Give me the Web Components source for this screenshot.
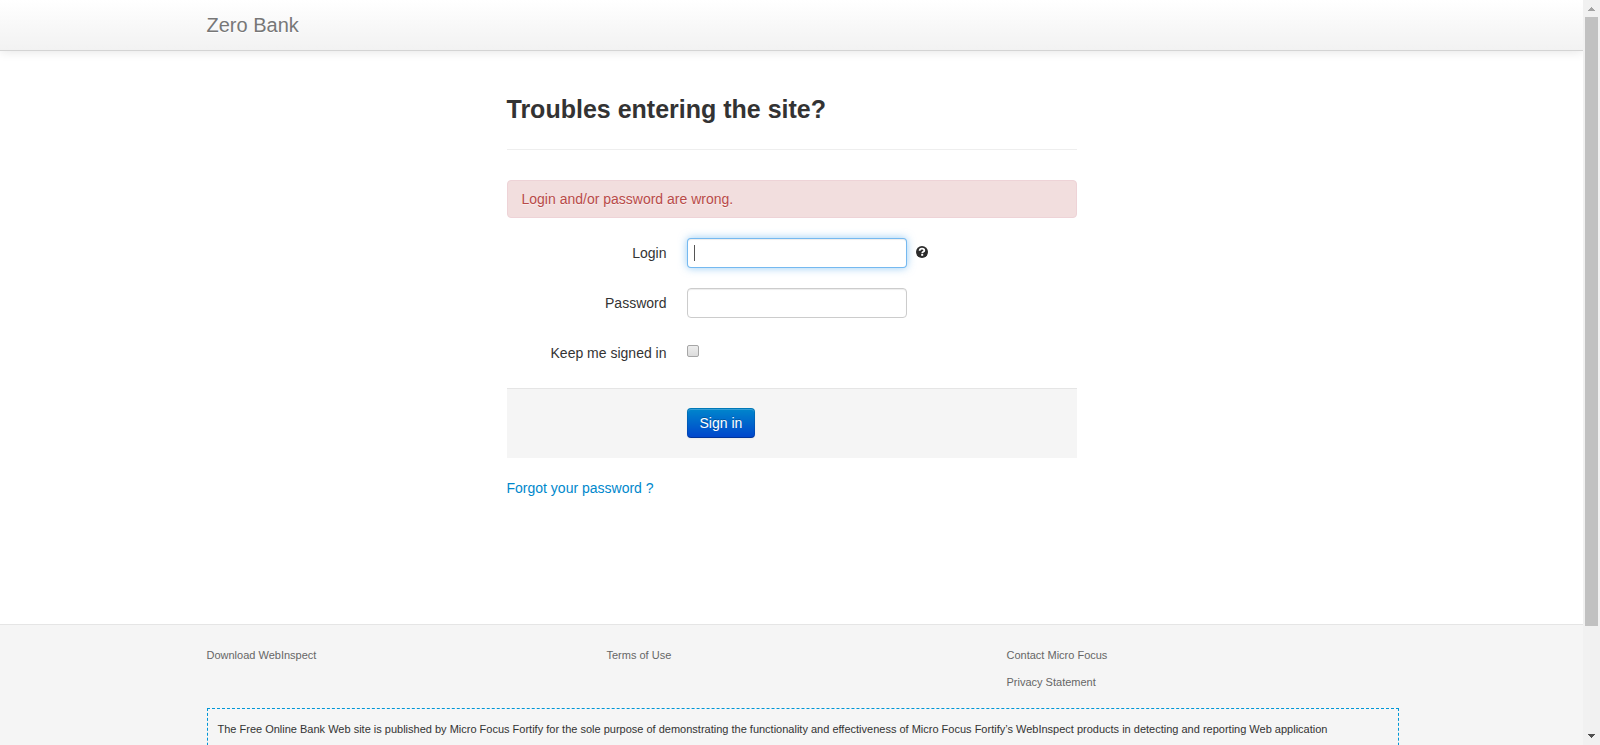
<!DOCTYPE html>
<html lang="en">
<head>
<meta charset="utf-8">
<meta name="viewport" content="width=device-width, initial-scale=1">
<title>Zero - Log in</title>
<style>
html, body { margin: 0; height: 100%; }
body { font: 14px/20px "Liberation Sans", Arial, sans-serif; color: #333; background: #fff; overflow: hidden; }
</style>
</head>
<body>
<zero-window>
  <zero-navbar>Zero Bank</zero-navbar>
  <zero-login>
    <zero-alert>Login and/or password are wrong.</zero-alert>
  </zero-login>
  <zero-footer></zero-footer>
</zero-window>

<script>
function define(name, html, setup) {
  const template = document.createElement('template');
  template.innerHTML = html;
  customElements.define(name, class extends HTMLElement {
    constructor() {
      super();
      this.attachShadow({ mode: 'open', delegatesFocus: true }).append(template.content.cloneNode(true));
    }
    connectedCallback() { if (setup) setup(this, this.shadowRoot); }
  });
}

define('zero-scrollbar', `
<style>
:host { display: flex; flex-direction: column; width: 17px; background: #f1f1f1; }
svg { display: block; flex: none; width: 17px; height: 17px; }
.track { flex: 1; display: grid; grid-template-rows: 6fr 1fr; padding: 0 2px; }
.thumb { background: #c1c1c1; }
</style>
<svg viewBox="0 0 17 17" shape-rendering="crispEdges" aria-hidden="true"><path fill="#a3a3a3" d="M8 7h1v1h1v1h1v1h1v1H5v-1h1V9h1V8h1z"/></svg>
<div class="track"><div class="thumb"></div></div>
<svg viewBox="0 0 17 17" shape-rendering="crispEdges" aria-hidden="true"><path fill="#505050" d="M5 6h7v1h-1v1h-1v1H9v1H8V9H7V8H6V7H5z"/></svg>`);

define('zero-window', `
<style>
:host { display: grid; grid-template-columns: minmax(0, 1fr) auto; height: 100vh; overflow: hidden; }
.page { overflow: hidden; display: flex; flex-direction: column; }
</style>
<div class="page"><slot></slot></div>
<zero-scrollbar></zero-scrollbar>`);

define('zero-navbar', `
<style>
:host { display: block; flex: none; background: linear-gradient(#fff, #f2f2f2); border-bottom: 1px solid #d4d4d4; box-shadow: 0 1px 10px rgba(0,0,0,.1); }
.container { max-width: 1170px; margin: 0 auto; padding: 15px 0; }
a { display: block; width: fit-content; font-size: 20px; line-height: 20px; color: #777; text-decoration: none; text-shadow: 0 1px 0 #fff; }
</style>
<div class="container"><a href="#"><slot></slot></a></div>`);

define('zero-alert', `
<style>
:host { display: block; padding: 8px 14px; border: 1px solid #eed3d7; border-radius: 4px; background: #f2dede; color: #b94a48; text-shadow: 0 1px 0 rgba(255,255,255,.5); }
</style>
<slot></slot>`);

define('zero-field', `
<style>
:host { display: grid; grid-template-columns: 160px 1fr; column-gap: 20px; min-height: 30px; margin-bottom: 20px; }
label { padding-top: 5px; text-align: right; }
.control { display: flex; gap: 9px; }
input { box-sizing: border-box; margin: 0; font: inherit; color: #555; }
input.text { width: 220px; height: 30px; padding: 4px 6px; border: 1px solid #ccc; border-radius: 4px; background: #fff; outline: 0; box-shadow: inset 0 1px 1px rgba(0,0,0,.075); }
:host([active]) input.text { border-color: rgba(82,168,236,.8); caret-color: transparent; background: linear-gradient(#555, #555) 6px 6px / 1px 16px no-repeat #fff; box-shadow: inset 0 1px 1px rgba(0,0,0,.075), 0 0 8px rgba(82,168,236,.6); }
input.check { appearance: none; width: 12px; height: 12px; margin-top: 7px; border: 1px solid #a6a6a6; border-radius: 2px; background: linear-gradient(#ededed, #dcdcdc); }
svg { width: 12px; height: 12px; margin-top: 8px; }
svg[hidden] { display: none; }
</style>
<label for="input"><slot></slot></label>
<div class="control">
  <input id="input">
  <svg hidden viewBox="0 0 12 12" aria-hidden="true"><circle cx="6" cy="6" r="6" fill="#2b2b2b"/><path d="M3.6 4.7C3.7 3.2 4.7 2.6 6 2.6c1.4 0 2.3.7 2.3 1.8 0 1.5-2.1 1.3-2.1 2.8" fill="none" stroke="#fff" stroke-width="1.8"/><path d="M5.2 8h2v1.8h-2z" fill="#fff"/></svg>
</div>`, (host, root) => {
  const input = root.querySelector('input');
  input.type = host.getAttribute('type') || 'text';
  input.className = input.type === 'checkbox' ? 'check' : 'text';
  root.querySelector('svg').toggleAttribute('hidden', !host.hasAttribute('help'));
});

define('zero-login', `
<style>
:host { display: block; box-sizing: border-box; flex: none; width: 100%; max-width: 570px; min-height: 573px; margin: 0 auto; padding-top: 38px; }
h3 { margin: 0; padding-bottom: 20px; font-size: 25px; line-height: 40px; border-bottom: 1px solid #eee; }
form { padding-top: 30px; }
::slotted(zero-alert) { margin-bottom: 20px; }
.actions { padding: 19px 20px 20px 180px; border-top: 1px solid #e5e5e5; background: #f5f5f5; margin-bottom: 20px; }
button { display: block; box-sizing: border-box; margin: 0; padding: 4px 12px; font: inherit; color: #fff; text-shadow: 0 -1px 0 rgba(0,0,0,.25); border: 1px solid; border-color: rgba(0,0,0,.1) rgba(0,0,0,.1) rgba(0,0,0,.25); border-radius: 4px; background: linear-gradient(#08c, #04c) border-box #04c; box-shadow: inset 0 1px 0 rgba(255,255,255,.2), 0 1px 2px rgba(0,0,0,.05); }
a { color: #08c; text-decoration: none; }
</style>
<h3>Troubles entering the site?</h3>
<form>
  <slot></slot>
  <zero-field active help>Login</zero-field>
  <zero-field type="password">Password</zero-field>
  <zero-field type="checkbox">Keep me signed in</zero-field>
  <div class="actions"><button type="button">Sign in</button></div>
  <a href="#">Forgot your password ?</a>
</form>`);

define('zero-footer', `
<style>
:host { display: block; flex: none; border-top: 1px solid #e5e5e5; background: #f5f5f5; font-size: 11px; line-height: 20px; }
.container { max-width: 1170px; margin: 0 auto; padding-top: 20px; }
.links { display: grid; grid-template-columns: repeat(3, 1fr); column-gap: 30px; }
ul { list-style: none; margin: 0; padding: 0; }
li { margin-bottom: 7px; }
a { color: #666; text-decoration: none; }
.disclaimer { margin: 9px 0 20px; padding: 10px; border: 1px dashed #0096d6; min-height: 80px; margin-right: -22px; }
</style>
<div class="container">
  <div class="links">
    <ul><li><a href="#">Download WebInspect</a></li></ul>
    <ul><li><a href="#">Terms of Use</a></li></ul>
    <ul><li><a href="#">Contact Micro Focus</a></li><li><a href="#">Privacy Statement</a></li></ul>
  </div>
  <div class="disclaimer">The Free Online Bank Web site is published by Micro Focus Fortify for the sole purpose of demonstrating the functionality and effectiveness of Micro Focus Fortify’s WebInspect products in detecting and reporting Web application</div>
</div>`);
</script>
</body>
</html>
